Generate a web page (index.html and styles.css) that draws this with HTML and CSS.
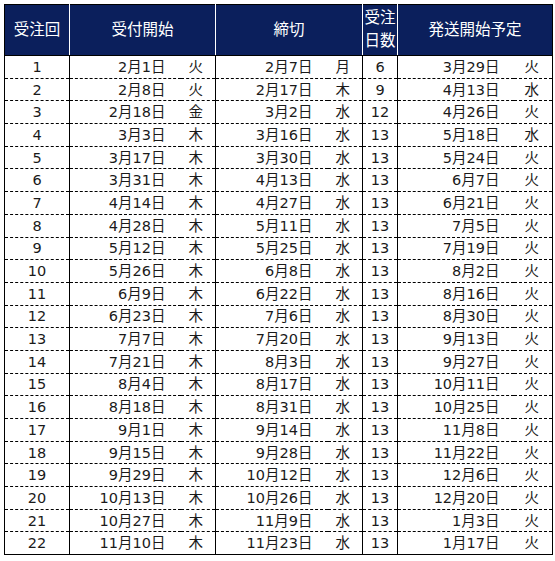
FILE: index.html
```html
<!DOCTYPE html>
<html lang="ja">
<head>
<meta charset="utf-8">
<link rel="stylesheet" href="styles.css">
</head>
<body>
<table class="sched">
<colgroup>
<col class="c-no"><col class="c-d1"><col class="c-w"><col class="c-d2"><col class="c-w"><col class="c-days"><col class="c-d3"><col class="c-w3">
</colgroup>
<thead>
<tr><th>受注回</th><th colspan="2">受付開始</th><th colspan="2">締切</th><th class="two">受注<br>日数</th><th colspan="2">発送開始予定</th></tr>
</thead>
<tbody>
<tr><td class="no">1</td><td class="d">2月1日</td><td class="w">火</td><td class="d">2月7日</td><td class="w">月</td><td class="no">6</td><td class="d d3">3月29日</td><td class="w w3">火</td></tr>
<tr><td class="no">2</td><td class="d">2月8日</td><td class="w">火</td><td class="d">2月17日</td><td class="w">木</td><td class="no">9</td><td class="d d3">4月13日</td><td class="w w3">水</td></tr>
<tr><td class="no">3</td><td class="d">2月18日</td><td class="w">金</td><td class="d">3月2日</td><td class="w">水</td><td class="no">12</td><td class="d d3">4月26日</td><td class="w w3">火</td></tr>
<tr><td class="no">4</td><td class="d">3月3日</td><td class="w">木</td><td class="d">3月16日</td><td class="w">水</td><td class="no">13</td><td class="d d3">5月18日</td><td class="w w3">水</td></tr>
<tr><td class="no">5</td><td class="d">3月17日</td><td class="w">木</td><td class="d">3月30日</td><td class="w">水</td><td class="no">13</td><td class="d d3">5月24日</td><td class="w w3">火</td></tr>
<tr><td class="no">6</td><td class="d">3月31日</td><td class="w">木</td><td class="d">4月13日</td><td class="w">水</td><td class="no">13</td><td class="d d3">6月7日</td><td class="w w3">火</td></tr>
<tr><td class="no">7</td><td class="d">4月14日</td><td class="w">木</td><td class="d">4月27日</td><td class="w">水</td><td class="no">13</td><td class="d d3">6月21日</td><td class="w w3">火</td></tr>
<tr><td class="no">8</td><td class="d">4月28日</td><td class="w">木</td><td class="d">5月11日</td><td class="w">水</td><td class="no">13</td><td class="d d3">7月5日</td><td class="w w3">火</td></tr>
<tr><td class="no">9</td><td class="d">5月12日</td><td class="w">木</td><td class="d">5月25日</td><td class="w">水</td><td class="no">13</td><td class="d d3">7月19日</td><td class="w w3">火</td></tr>
<tr><td class="no">10</td><td class="d">5月26日</td><td class="w">木</td><td class="d">6月8日</td><td class="w">水</td><td class="no">13</td><td class="d d3">8月2日</td><td class="w w3">火</td></tr>
<tr><td class="no">11</td><td class="d">6月9日</td><td class="w">木</td><td class="d">6月22日</td><td class="w">水</td><td class="no">13</td><td class="d d3">8月16日</td><td class="w w3">火</td></tr>
<tr><td class="no">12</td><td class="d">6月23日</td><td class="w">木</td><td class="d">7月6日</td><td class="w">水</td><td class="no">13</td><td class="d d3">8月30日</td><td class="w w3">火</td></tr>
<tr><td class="no">13</td><td class="d">7月7日</td><td class="w">木</td><td class="d">7月20日</td><td class="w">水</td><td class="no">13</td><td class="d d3">9月13日</td><td class="w w3">火</td></tr>
<tr><td class="no">14</td><td class="d">7月21日</td><td class="w">木</td><td class="d">8月3日</td><td class="w">水</td><td class="no">13</td><td class="d d3">9月27日</td><td class="w w3">火</td></tr>
<tr><td class="no">15</td><td class="d">8月4日</td><td class="w">木</td><td class="d">8月17日</td><td class="w">水</td><td class="no">13</td><td class="d d3">10月11日</td><td class="w w3">火</td></tr>
<tr><td class="no">16</td><td class="d">8月18日</td><td class="w">木</td><td class="d">8月31日</td><td class="w">水</td><td class="no">13</td><td class="d d3">10月25日</td><td class="w w3">火</td></tr>
<tr><td class="no">17</td><td class="d">9月1日</td><td class="w">木</td><td class="d">9月14日</td><td class="w">水</td><td class="no">13</td><td class="d d3">11月8日</td><td class="w w3">火</td></tr>
<tr><td class="no">18</td><td class="d">9月15日</td><td class="w">木</td><td class="d">9月28日</td><td class="w">水</td><td class="no">13</td><td class="d d3">11月22日</td><td class="w w3">火</td></tr>
<tr><td class="no">19</td><td class="d">9月29日</td><td class="w">木</td><td class="d">10月12日</td><td class="w">水</td><td class="no">13</td><td class="d d3">12月6日</td><td class="w w3">火</td></tr>
<tr><td class="no">20</td><td class="d">10月13日</td><td class="w">木</td><td class="d">10月26日</td><td class="w">水</td><td class="no">13</td><td class="d d3">12月20日</td><td class="w w3">火</td></tr>
<tr><td class="no">21</td><td class="d">10月27日</td><td class="w">木</td><td class="d">11月9日</td><td class="w">水</td><td class="no">13</td><td class="d d3">1月3日</td><td class="w w3">火</td></tr>
<tr><td class="no">22</td><td class="d">11月10日</td><td class="w">木</td><td class="d">11月23日</td><td class="w">水</td><td class="no">13</td><td class="d d3">1月17日</td><td class="w w3">火</td></tr>
</tbody>
</table>
</body>
</html>
```
FILE: styles.css
```css
html, body {
  margin: 0;
  padding: 0;
  background: #fff;
}
body {
  padding: 4px 0 0 4px;
  font-family: "DejaVu Sans", "Noto Sans CJK JP", sans-serif;
  color: #1a1a1a;
}
.sched {
  border-collapse: collapse;
  table-layout: fixed;
  width: 549px;
  border: 1px solid #000;
}
.c-no { width: 65px; }
.c-d1 { width: 111px; }
.c-w { width: 35px; }
.c-d2 { width: 112px; }
.c-days { width: 35px; }
.c-d3 { width: 116px; }
.c-w3 { width: 39px; }

.sched th {
  background: #0b1f5c;
  color: #fff;
  font-weight: normal;
  font-size: 15.5px;
  line-height: 20px;
  height: 50px;
  padding: 0;
  text-align: center;
  border-left: 1px solid #fff;
  border-bottom: 1px solid #000;
}
.sched th:first-child { border-left: 1px solid #000; }
.sched th.two { line-height: 23px; }

.sched td {
  height: 21.7px;
  padding: 0;
  font-size: 14.5px;
  line-height: 20px;
  border-top: 1px dashed #000;
  white-space: nowrap;
}
.sched tbody tr:first-child td { border-top: 1px solid #000; }
.sched td.no {
  text-align: center;
  border-left: 1px solid #000;
  border-right: 1px solid #000;
}
.sched td.d {
  text-align: right;
  padding-right: 15px;
  border-left: 1px solid #000;
}
.sched td.d3 { padding-right: 14px; }
.sched td.w {
  text-align: center;
  padding-right: 4px;
  border-right: 1px solid #000;
}
.sched td.w3 { padding-right: 2px; }
```
